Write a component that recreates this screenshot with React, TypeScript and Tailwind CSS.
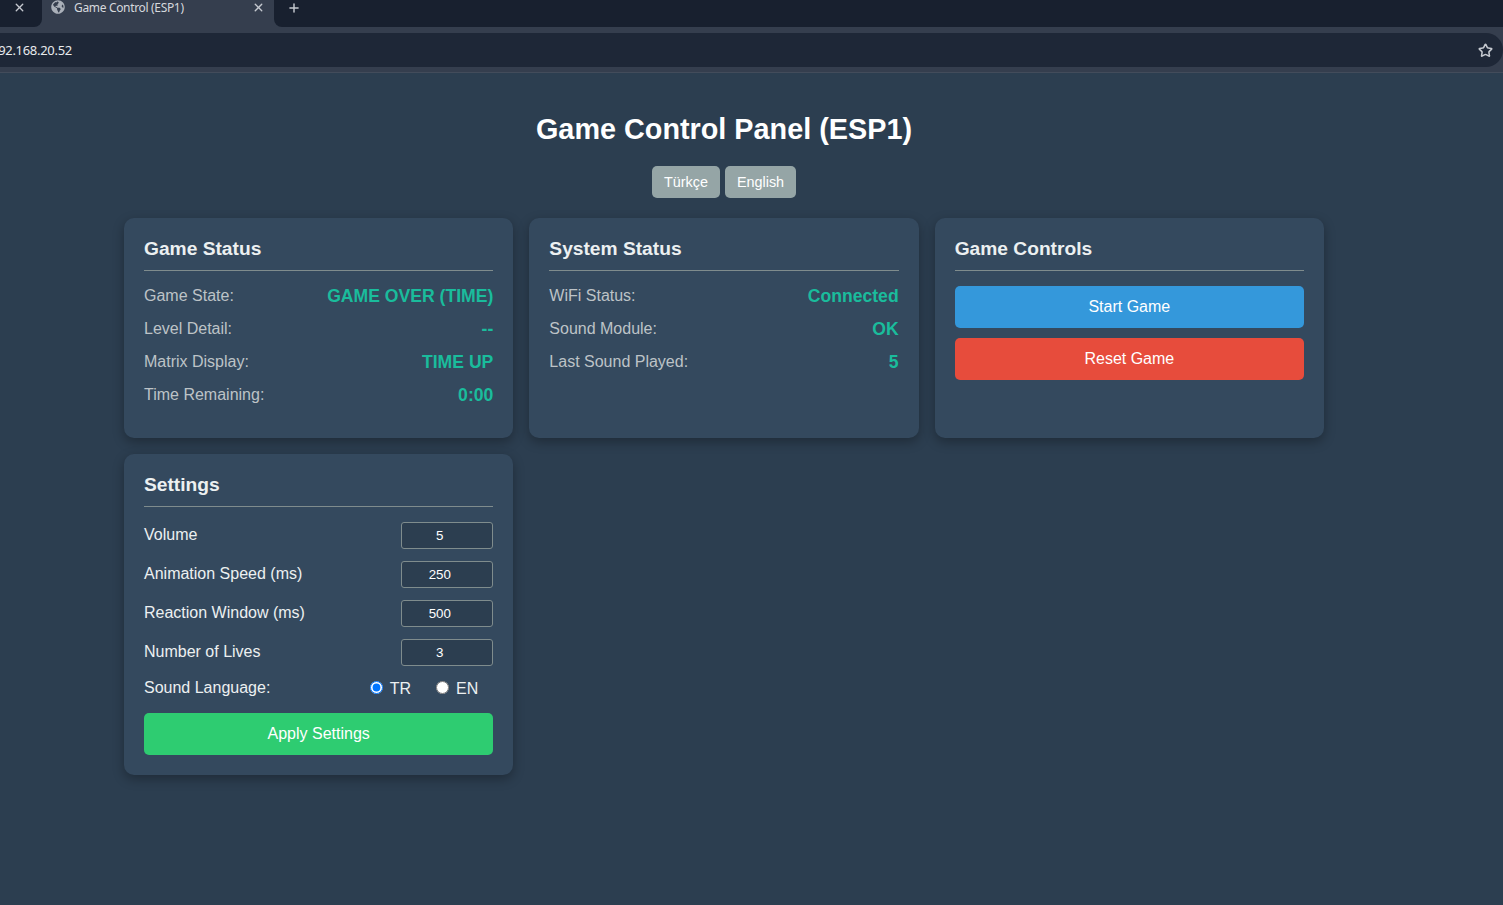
import { Plus, Star, X } from "lucide-react";
import { FaGlobeAmericas } from "react-icons/fa";

const GAME_ROWS = [
  ["Game State:", "GAME OVER (TIME)"],
  ["Level Detail:", "--"],
  ["Matrix Display:", "TIME UP"],
  ["Time Remaining:", "0:00"],
];

const SYSTEM_ROWS = [
  ["WiFi Status:", "Connected"],
  ["Sound Module:", "OK"],
  ["Last Sound Played:", "5"],
];

const SETTINGS = [
  ["Volume", "5"],
  ["Animation Speed (ms)", "250"],
  ["Reaction Window (ms)", "500"],
  ["Number of Lives", "3"],
];

function BrowserBar() {
  return (
    <div className="font-['Noto_Sans',sans-serif]">
      <div className="flex h-[27px] bg-[#353e4e] text-[#c5c9d0]">
        <div className="flex w-[42px] justify-start rounded-br-lg bg-[#18202f] pl-[13px]">
          <X size={13} strokeWidth={2.5} className="mt-[1px]" />
        </div>
        <div className="flex w-[232px] items-start pl-[9px] text-[12px] leading-[14px]">
          <FaGlobeAmericas size={14} className="text-[#aab0b9]" />
          <span className="ml-[9px] pt-px tracking-[-0.33px] text-[#d5d8dd]">Game Control (ESP1)</span>
          <X size={13} strokeWidth={2.5} className="ml-auto mr-[9px] mt-[1px]" />
        </div>
        <div className="flex flex-1 rounded-bl-lg bg-[#18202f] pl-[13px]">
          <Plus size={14} strokeWidth={2.5} className="mt-[1px]" />
        </div>
      </div>
      <div className="h-[46px] border-b border-[#434c5b] bg-[#353e4e] pt-[6px]">
        <div className="flex h-[34px] items-center justify-between overflow-hidden rounded-r-full bg-[#1e2737] pr-[10px]">
          <span className="-ml-[9px] mt-px text-[13px] tracking-[-0.3px] text-[#e8eaed]">192.168.20.52</span>
          <Star size={15} strokeWidth={2.5} className="text-[#c5c9d0]" />
        </div>
      </div>
    </div>
  );
}

function StatusRows({ rows }: { rows: string[][] }) {
  return (
    <div className="flex flex-col">
      {rows.map(([label, value]) => (
        <div key={label} className="flex h-[33px] items-start justify-between leading-[19px]">
          <span className="text-[#bdc3c7]">{label}</span>
          <span className="text-[17.6px] font-bold leading-[20px] text-[#1abc9c]">{value}</span>
        </div>
      ))}
    </div>
  );
}

function Card({ title, children }: { title: string; children: React.ReactNode }) {
  return (
    <div className="rounded-[10px] bg-[#34495e] p-5 shadow-[0_4px_12px_rgba(0,0,0,0.3)]">
      <h2 className="mb-[15px] h-[33px] border-b border-[#7f8c8d] text-[19.2px] font-bold leading-[21px] text-[#ecf0f1]">
        {title}
      </h2>
      {children}
    </div>
  );
}

export default function App() {
  return (
    <div className="min-h-[905px] bg-[#2c3e50] font-['Liberation_Sans',Arial,sans-serif] text-[16px] text-[#ecf0f1]">
      <BrowserBar />

      <div className="ml-[124px] w-[1200px] pb-[130px]">
        <h1 className="pt-[37px] text-center text-[28.8px] font-bold leading-[38px] text-white">
          Game Control Panel (ESP1)
        </h1>

        {/* Language buttons */}
        <div className="mt-[18px] flex justify-center gap-[5px]">
          <button className="h-8 rounded-[5px] bg-[#95a5a6] px-3 pt-px text-[14.4px] text-white">Türkçe</button>
          <button className="h-8 rounded-[5px] bg-[#95a5a6] px-3 pt-px text-[14.4px] text-white">English</button>
        </div>

        <div className="mt-5 grid grid-cols-3 gap-4">
          <Card title="Game Status">
            <StatusRows rows={GAME_ROWS} />
          </Card>
          <Card title="System Status">
            <StatusRows rows={SYSTEM_ROWS} />
          </Card>
          <Card title="Game Controls">
            <div className="flex flex-col gap-[10px]">
              <button className="h-[42px] rounded-[5px] bg-[#3498db] text-white">Start Game</button>
              <button className="h-[42px] rounded-[5px] bg-[#e74c3c] text-white">Reset Game</button>
            </div>
          </Card>

          <Card title="Settings">
            <div className="flex flex-col gap-3">
              {SETTINGS.map(([label, value]) => (
                <div key={label} className="flex h-[27px] items-center justify-between">
                  <label className="-mt-[2px]">{label}</label>
                  <input
                    type="number"
                    readOnly
                    value={value}
                    className="h-[27px] w-[92px] rounded-[3px] border border-[#7f8c8d] bg-[#2c3e50] px-2 text-center text-[13.33px] text-white"
                  />
                </div>
              ))}
            </div>
            <div className="mt-[9px] flex h-[26px] items-center justify-between">
              <span>Sound Language:</span>
              <div className="mr-[15px] flex items-center">
                <input type="radio" name="lang" defaultChecked className="m-0 -mt-[2px] h-[13px] w-[13px]" />
                <span className="ml-[7px] pt-px text-[#ecf0f1]">TR</span>
                <input type="radio" name="lang" className="m-0 -mt-[2px] ml-[25px] h-[13px] w-[13px]" />
                <span className="ml-[7px] pt-px text-[#ecf0f1]">EN</span>
              </div>
            </div>
            <button className="mt-[12px] h-[42px] w-full rounded-[5px] bg-[#2ecc71] text-white">Apply Settings</button>
          </Card>
        </div>
      </div>
    </div>
  );
}
